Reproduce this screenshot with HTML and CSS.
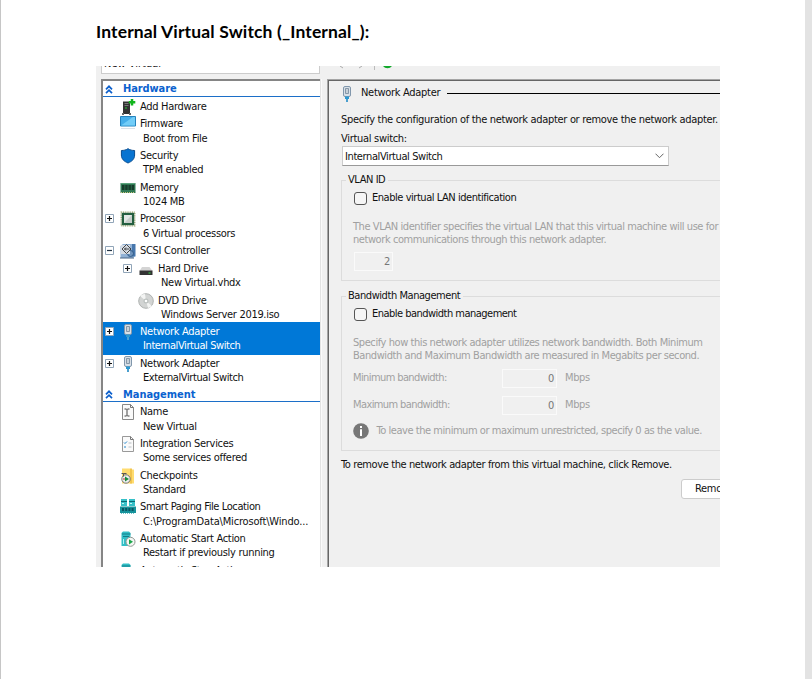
FILE: index.html
```
<!DOCTYPE html>
<html lang="en">
<head>
<meta charset="utf-8">
<title>Internal Virtual Switch</title>
<link rel="stylesheet" href="styles.css">
</head>
<body>
<svg class="defs" aria-hidden="true">
  <symbol id="plus" viewBox="0 0 9 9"><path d="M.5.5h8v8h-8z" fill="#fff" stroke="#91a5b8"/><path d="M2 4.5h5M4.5 2v5" stroke="#111" stroke-width="1.2"/></symbol>
  <symbol id="minus" viewBox="0 0 9 9"><path d="M.5.5h8v8h-8z" fill="#fff" stroke="#91a5b8"/><path d="M2 4.5h5" stroke="#234" stroke-width="1.2"/></symbol>
  <symbol id="chev" viewBox="0 0 8 9"><path d="M1 4.300 4 1.300 7 4.300M1 8.200 4 5.200 7 8.200" fill="none" stroke="#0b5fcc" stroke-width="1.700"/></symbol>
  <symbol id="add" viewBox="0 0 16 16"><path d="M3 2.500h7V15H3z" fill="#333"/><path d="M4.500 4h4v1h-4zM4.500 6h4v1h-4z" fill="#777"/><path d="M5 8.500h2v1H5z" fill="#2c3"/><path d="M2 14h2v2H2zM9 14h2v2H9z" fill="#666"/><path d="M12 0v6.500M8.800 3.300h6.500" stroke="#12b51c" stroke-width="2.500"/></symbol>
  <symbol id="firm" viewBox="0 0 16 16"><path d="M.5.500h15v9.500H.5z" fill="#45aeea" stroke="#2583bd"/><path d="M1 9.500 13 1h2v8.500z" fill="#72cdf8"/><path d="M1 12.500h14" stroke="#dbe2e9"/></symbol>
  <symbol id="shield" viewBox="0 0 16 16"><path d="M8 .7c2 1.300 4 1.800 6.600 1.800V7c0 4-2.500 6.300-6.600 8C3.900 13.300 1.400 11 1.400 7V2.500C4 2.500 6 2 8 .7z" fill="#0874d1" stroke="#084d91"/></symbol>
  <symbol id="mem" viewBox="0 0 16 16"><path d="M.5 3h15v10H.5z" fill="#2f7853"/><path d="M2 5h2.500v5H2zM5.200 5h2.500v5H5.200zM8.400 5h2.500v5H8.400zM11.600 5h2.500v5h-2.500z" fill="#173c2b"/><path d="M1 12.500h14" stroke="#c8c37c" stroke-dasharray="1 1"/><path d="M1 3.500h14" stroke="#5ba37c"/></symbol>
  <symbol id="cpu" viewBox="0 0 16 16"><path d="M1.200 1.200h13.600v13.600H1.200z" fill="none" stroke="#99a36b" stroke-width="1.300" stroke-dasharray="1 .8"/><path d="M1.800 1.800h12.400v12.400H1.800z" fill="#245f40"/><path d="M4 4h8v8H4z" fill="#e2e7e4"/><path d="m4 12 8-8v8z" fill="#c6cdc9"/></symbol>
  <symbol id="scsi" viewBox="0 0 16 16"><path d="M.5 3 3 1h12v12l-2 2H.5z" fill="#91b1d5"/><path d="M12 1h3.500v12.500H12z" fill="#4777ad"/><circle cx="10.500" cy="10.500" r="3" fill="#6f94bd" stroke="#315b88"/><path d="M1 2h9v9H1z" fill="#d4dbe4"/><path d="m2 6 4.500-4.500L11 6l-4.500 4.500zM4.500 6h5M6 4.500 4.500 6 6 7.500" fill="none" stroke="#333" stroke-width=".9"/><path d="M0 15h14" stroke="#476486"/></symbol>
  <symbol id="hdd" viewBox="0 0 16 16"><path d="M4 6h7.500l3 4H1.500z" fill="#d4d4d4"/><path d="M1.500 9.500h13V14h-13z" fill="#333"/><path d="M2 9.500h12" stroke="#888"/><path d="M10.500 12h2" stroke="#3d4"/></symbol>
  <symbol id="dvd" viewBox="0 0 16 16"><circle cx="8" cy="8" r="7.300" fill="#d2d4d3" stroke="#afb2b1"/><path d="M8 8 2 3A7 7 0 0 1 7 1zM8 8l6 5a7 7 0 0 1-4 2z" fill="#f3f4f3"/><circle cx="8" cy="8" r="2.500" fill="#bbc0be"/><circle cx="8" cy="8" r="1.300" fill="#fff"/></symbol>
  <symbol id="net" viewBox="0 0 16 16"><rect x="4.500" y=".5" width="7" height="10" rx="1.500" fill="#d9e0e7" stroke="#8197ac"/><path d="M6.500 2.500h3v5h-3z" fill="#f6f8fa" stroke="#6d8194" stroke-width=".8"/><path d="M8 3v4" stroke="#8395a4" stroke-width=".8"/><path d="M6 10.500h4V13H6z" fill="#2c99d1"/><path d="M8 13v3" stroke="#4b9fce" stroke-width="2"/></symbol>
  <symbol id="name" viewBox="0 0 16 16"><path d="M2.500.5h8l3 3v12h-11z" fill="#fafafa" stroke="#898989"/><path d="M10.500.5v3h3" fill="none" stroke="#777"/><path d="M4.500 5h2l.5.500.5-.5h2M7 5.500v6M4.500 12h2l.5-.5.5.500h2" fill="none" stroke="#444"/></symbol>
  <symbol id="integ" viewBox="0 0 16 16"><path d="M2.500.5h8l3 3v12h-11z" fill="#fafafa" stroke="#999"/><path d="M10.500.5v3h3" fill="none" stroke="#777"/><path d="m4 6.500 1 1 2-2M4 11h2" fill="none" stroke="#2287cc"/><path d="M8.500 7h3M8.500 11h3" stroke="#b8bdc2"/></symbol>
  <symbol id="check" viewBox="0 0 16 16"><path d="M2 .5h8l1 1h3v14H2z" fill="#ffdc70"/><path d="M10 .5h2v15h-2z" fill="#f2c54f"/><circle cx="6" cy="11" r="4.200" fill="#eee" stroke="#777"/><path d="M1.500 5.500h2v3M3.500 5.500h3" stroke="#555" fill="none"/><path d="M5 8.500v5L9 11z" fill="#188c3c"/><path d="M3 11h2" stroke="#b33"/></symbol>
  <symbol id="page" viewBox="0 0 16 16"><path d="M1 0h6v7H1zM9 0h6v7H9z" fill="#35c0c8"/><path d="M1 2.500h6M9 2.500h6" stroke="#0a6873"/><path d="M2 4.500h2M10 4.500h2" stroke="#c8f4f5"/><path d="M0 7.500h16V14H0z" fill="#16929b"/><path d="M2 9h2v3H2zM5.200 9h2v3h-2zM8.400 9h2v3h-2zM11.600 9h2v3h-2z" fill="#085662"/><path d="M1 14.500h14" stroke="#6cc4c8" stroke-dasharray="1 1"/></symbol>
  <symbol id="auto" viewBox="0 0 16 16"><path d="m1.500 2 1.500-1.500h6L10.500 2v13h-9z" fill="#32bfc6"/><path d="M2 3h8.500M3 5.500h6" stroke="#137d88"/><path d="M3.500 8v5" stroke="#b3f3f5"/><circle cx="10.500" cy="10.800" r="4.500" fill="#f5f7f5" stroke="#8f9691"/><path d="M9 8.200v5.200l4-2.600z" fill="#1ca64a"/></symbol>
</svg>
<main class="page">
  <h1>Internal Virtual Switch (_Internal_):</h1>
  <section class="shot">
    <div class="topbar">
      <div class="vm"><span>New Virtual</span></div>
      <svg class="tools" width="75" height="8"><path d="m12 0 3 2M31 2l3-2" stroke="#aaa"/><path d="M46.500 0v4" stroke="#bbb"/><path d="M55 0a5.500 5.500 0 0 0 9 0z" fill="#12a82b"/></svg>
    </div>
    <div class="panes">
      <nav class="tree">
        <h2><svg><use href="#chev"/></svg>Hardware</h2>
        <div class="row first"><i></i><svg><use href="#add"/></svg><p>Add Hardware</p></div>
        <div class="row"><i></i><svg><use href="#firm"/></svg><p>Firmware<small>Boot from File</small></p></div>
        <div class="row"><i></i><svg><use href="#shield"/></svg><p>Security<small>TPM enabled</small></p></div>
        <div class="row"><i></i><svg><use href="#mem"/></svg><p>Memory<small>1024 MB</small></p></div>
        <div class="row"><i><svg><use href="#plus"/></svg></i><svg><use href="#cpu"/></svg><p>Processor<small>6 Virtual processors</small></p></div>
        <div class="row"><i><svg><use href="#minus"/></svg></i><svg><use href="#scsi"/></svg><p>SCSI Controller</p></div>
        <div class="row child"><i><svg><use href="#plus"/></svg></i><svg><use href="#hdd"/></svg><p>Hard Drive<small>New Virtual.vhdx</small></p></div>
        <div class="row child"><i></i><svg><use href="#dvd"/></svg><p>DVD Drive<small>Windows Server 2019.iso</small></p></div>
        <div class="row selected"><i><svg><use href="#plus"/></svg></i><svg><use href="#net"/></svg><p>Network Adapter<small class="snug">InternalVirtual Switch</small></p></div>
        <div class="row"><i><svg><use href="#plus"/></svg></i><svg><use href="#net"/></svg><p>Network Adapter<small class="snug">ExternalVirtual Switch</small></p></div>
        <h2 class="later"><svg><use href="#chev"/></svg>Management</h2>
        <div class="row"><i></i><svg><use href="#name"/></svg><p>Name<small>New Virtual</small></p></div>
        <div class="row"><i></i><svg><use href="#integ"/></svg><p>Integration Services<small>Some services offered</small></p></div>
        <div class="row"><i></i><svg><use href="#check"/></svg><p>Checkpoints<small>Standard</small></p></div>
        <div class="row"><i></i><svg><use href="#page"/></svg><p class="snug">Smart Paging File Location<small class="loose">C:\ProgramData\Microsoft\Windo...</small></p></div>
        <div class="row"><i></i><svg><use href="#auto"/></svg><p>Automatic Start Action<small>Restart if previously running</small></p></div>
        <div class="row"><i></i><svg><use href="#auto"/></svg><p>Automatic Stop Action</p></div>
      </nav>
      <div class="gutter"></div>
      <section class="detail">
        <header><svg><use href="#net"/></svg><span>Network Adapter</span><hr></header>
        <p class="intro">Specify the configuration of the network adapter or remove the network adapter.</p>
        <p class="label">Virtual switch:</p>
        <div class="select"><span class="snug">InternalVirtual Switch</span><svg width="9" height="6"><path d="m.5.700 4 4 4-4" fill="none" stroke="#666"/></svg></div>
        <fieldset class="vlan">
          <legend>VLAN ID</legend>
          <label><b></b><span>Enable virtual LAN identification</span></label>
          <p class="note">The VLAN identifier specifies the virtual LAN that this virtual machine will use for<br>network communications through this network adapter.</p>
          <div class="num short">2</div>
        </fieldset>
        <fieldset class="band">
          <legend>Bandwidth Management</legend>
          <label><b></b><span>Enable bandwidth management</span></label>
          <p class="note">Specify how this network adapter utilizes network bandwidth. Both Minimum<br>Bandwidth and Maximum Bandwidth are measured in Megabits per second.</p>
          <div class="limit"><span>Minimum bandwidth:</span><div class="num">0</div><em>Mbps</em></div>
          <div class="limit"><span>Maximum bandwidth:</span><div class="num">0</div><em>Mbps</em></div>
          <div class="info"><svg width="16" height="16"><circle cx="8" cy="8" r="7.800" fill="#777"/><path d="M7 3h2v2H7zM7 6.200h2V13H7z" fill="#fff"/></svg><span>To leave the minimum or maximum unrestricted, specify 0 as the value.</span></div>
        </fieldset>
        <p class="remove">To remove the network adapter from this virtual machine, click Remove.</p>
        <button>Remove</button>
      </section>
    </div>
  </section>
</main>
</body>
</html>
```

FILE: styles.css
```
* { box-sizing: border-box; }
body { margin: 0; background: #fff; }
.defs { display: none; }
.page { height: 679px; overflow: hidden; border-left: 1px solid #c6c6c6; border-right: 7px solid #e3e3e3; padding: 20px 0 0 95px; }
h1 { margin: 0; height: 46px; font: bold 17.500px/24px Lato, sans-serif; color: #000; letter-spacing: .14px; white-space: nowrap; }
.shot { width: 624px; height: 501px; overflow: hidden; background: #f0f0f0; color: #111; font: 11px/14.4px "DejaVu Sans Condensed", "DejaVu Sans", sans-serif; font-stretch: condensed; letter-spacing: -.3px; white-space: nowrap; }
.shot p { margin: 0; }
.shot .snug { letter-spacing: -.4px; }
.shot .loose { letter-spacing: -.17px; }
.topbar { display: flex; height: 13px; padding-left: 5px; }
.vm { width: 219px; height: 8px; overflow: hidden; background: #fff; border: 1px solid #ccc; border-top: 0; padding-left: 2px; }
.vm span { display: block; margin-top: -9px; letter-spacing: 0; }
.tools { margin-left: 8px; }
.panes { display: flex; height: 488px; padding-left: 5px; }
.tree { width: 219px; flex: none; overflow: hidden; background: #fff; border-left: 2px solid #858585; border-top: 2px solid #858585; }
h2 { display: flex; align-items: center; gap: 10px; height: 16px; margin: 0 0 .5px; padding: 2px 0 0 2px; border-bottom: 1px solid #1c6fc8; color: #0b62cf; font-weight: bold; font-size: 11px; letter-spacing: -.1px; }
h2 svg { width: 8px; height: 9px; }
h2.later { height: 16px; padding-top: 2px; margin: -.6px 0 1.400px; letter-spacing: -.05px; }
.row { display: flex; min-height: 17.400px; padding: 1.500px 0 1.400px 3px; }
.row.first { padding-top: 2px; padding-bottom: 1.300px; }
.row i { width: 14px; flex: none; padding-top: 2px; margin-left: -1px; margin-right: 1px; }
.row i svg { display: block; width: 9px; height: 9px; }
.row > svg { width: 16px; height: 16px; flex: none; margin-top: -1px; }
.row p { padding-left: 4px; }
.row small { display: block; padding-left: 3px; font-size: 11px; }
.row.child { padding-left: 21px; }
.row.selected { margin-top: -1.500px; padding-top: 2.500px; background: #0078d7; color: #fff; }
.gutter { width: 7px; flex: none; border-left: 1px solid #e3e3e3; box-shadow: inset 1px 0 #fafafa; }
.detail { width: 400px; flex: none; border-left: 1px solid #a5a5a5; border-top: 1px solid #a5a5a5; box-shadow: inset 1px 1px #666; padding: 1px 0 0 13px; }
header { display: flex; align-items: center; height: 25px; }
header svg { width: 16px; height: 16px; flex: none; margin-right: 6px; margin-left: -2px; }
header hr { width: 290px; flex: none; margin: 0 0 0 7px; border: 0; border-top: 1px solid #000; }
.intro { padding-top: 7px; letter-spacing: -.32px; }
.label { padding-top: 5px; }
.select { display: flex; align-items: center; justify-content: space-between; width: 327px; height: 20px; margin-left: 1px; margin-top: -.5px; padding: 0 4px 0 2px; background: #fff; border: 1px solid #ccc; border-bottom-color: #999; }
.select span { padding-top: 1px; }
fieldset { position: relative; width: 400px; min-width: 0; margin: 13.500px 0 0; padding: 0 0 0 11px; border: 1px solid #dcdcdc; }
legend { position: absolute; top: -8px; left: 4px; padding: 0 3px 0 2px; background: #f0f0f0; letter-spacing: -.44px; }
label { display: flex; align-items: center; gap: 5px; padding: 10px 0 0 1px; letter-spacing: -.46px; }
label b { width: 13px; height: 13px; border: 1px solid #555; border-radius: 3px; background: #f5f5f5; }
.note { padding-top: 16px; line-height: 12.700px; letter-spacing: -.43px; color: #a0a0a0; }
.num { width: 55px; height: 19px; border: 1px solid #fafafa; padding: 1px 2px 0 0; text-align: right; line-height: 15px; color: #777; }
.num.short { width: 39px; margin: 5px 0 0 1px; }
.vlan { height: 101px; }
.band { height: 154.500px; margin-top: 15.200px; }
.band label { letter-spacing: -.52px; }
.limit { display: flex; align-items: center; height: 27px; color: #a0a0a0; }
.note + .limit { margin-top: 2.300px; }
.limit span { width: 149px; letter-spacing: -.6px; }
.limit em { margin-left: 8px; font-style: normal; letter-spacing: -.4px; }
.info { display: flex; align-items: center; gap: 7.500px; margin-top: 4px; color: #a0a0a0; letter-spacing: -.455px; }
.remove { padding-top: 7.500px; letter-spacing: -.39px; }
button { display: block; width: 76px; height: 20px; margin: 6.500px 0 0 340px; padding: 0 0 0 13px; border: 1px solid #ccc; border-radius: 3px; background: #fff; color: #111; font: inherit; letter-spacing: inherit; text-align: left; }
```
